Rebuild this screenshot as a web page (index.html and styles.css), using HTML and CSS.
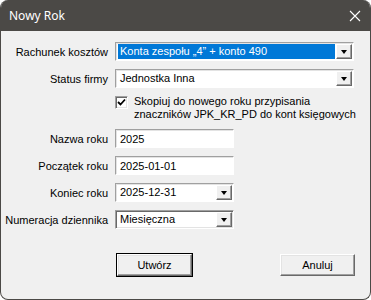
FILE: index.html
```html
<!DOCTYPE html>
<html lang="pl">
<head>
    <meta charset="UTF-8">
    <title>Nowy Rok</title>
    <link rel="stylesheet" href="styles.css">
</head>
<body>
    <div class="window">
        <div class="titlebar">
            <span class="title">Nowy Rok</span>
            <svg class="close" width="12" height="12" viewBox="0 0 12 12">
                <path d="M1 1 L11 11 M11 1 L1 11" stroke="#fff" stroke-width="1.1" fill="none"/>
            </svg>
        </div>

        <div class="form">
            <label class="label">Rachunek kosztów</label>
            <div class="combo wide">
                <span class="value selected">Konta zespołu „4” + konto 490</span>
                <span class="arrow"></span>
            </div>

            <label class="label">Status firmy</label>
            <div class="combo wide">
                <span class="value">Jednostka Inna</span>
                <span class="arrow"></span>
            </div>

            <span></span>
            <div class="check-row">
                <span class="checkbox">
                    <svg width="9" height="9" viewBox="0 0 9 9">
                        <path d="M1 4 L3.5 6.5 L8 1.5" stroke="#000" stroke-width="1.8" fill="none"/>
                    </svg>
                </span>
                <span class="check-text">Skopiuj do nowego roku przypisania<br>znaczników JPK_KR_PD do kont księgowych</span>
            </div>

            <label class="label">Nazwa roku</label>
            <div class="textbox">2025</div>

            <label class="label">Początek roku</label>
            <div class="textbox">2025-01-01</div>

            <label class="label">Koniec roku</label>
            <div class="combo short">
                <span class="value">2025-12-31</span>
                <span class="arrow"></span>
            </div>

            <label class="label">Numeracja dziennika</label>
            <div class="combo short deep">
                <span class="value">Miesięczna</span>
                <span class="arrow"></span>
            </div>
        </div>

        <div class="buttons">
            <button class="btn default">Utwórz</button>
            <button class="btn">Anuluj</button>
        </div>
    </div>
</body>
</html>
```

FILE: styles.css
```css
body {
    margin: 0;
    padding: 0;
    background: #ffffff;
    font-family: "Liberation Sans", Arial, sans-serif;
    font-size: 11px;
    color: #000;
}

.window {
    width: 371px;
    height: 300px;
    box-sizing: border-box;
    background: #f0f0f0;
    border: 1px solid #4b4946;
    border-top: none;
    border-radius: 8px;
    overflow: hidden;
}

.titlebar {
    height: 31px;
    background: #4b4946;
    display: flex;
    align-items: center;
    justify-content: space-between;
    padding: 0 10px 0 9px;
    margin: 0 -1px;
}

.title {
    color: #fff;
    font-family: "Noto Sans", "Open Sans", sans-serif;
    font-size: 12px;
}

.form {
    display: grid;
    grid-template-columns: 107px auto;
    column-gap: 7px;
    row-gap: 8px;
    padding-top: 11px;
    justify-items: start;
    align-items: center;
}

.label {
    justify-self: end;
    white-space: nowrap;
}

.combo,
.textbox {
    height: 19px;
    box-sizing: border-box;
    background: #fff;
    border: 1px solid #a0a0a0;
    border-right-color: #fff;
    border-bottom-color: #fff;
    box-shadow: inset 1px 1px 0 #e3e3e3;
    display: flex;
    align-items: center;
}

.combo.deep {
    border-color: #a0a0a0 #fff #fff #a0a0a0;
    box-shadow: inset 1px 1px 0 #696969, inset -1px -1px 0 #e3e3e3;
}

.wide {
    width: 239px;
}

.short,
.textbox {
    width: 119px;
}

.textbox {
    padding-left: 4px;
}

.value {
    flex: 1;
    height: 15px;
    line-height: 15px;
    margin: 0 1px 0 2px;
    padding-left: 2px;
}

.value.selected {
    background: #0078d7;
    color: #fff;
}

.arrow {
    width: 16px;
    height: 15px;
    box-sizing: border-box;
    margin-right: 1px;
    background: #f0f0f0;
    border: 1px solid;
    border-color: #fff #696969 #696969 #fff;
    box-shadow: inset -1px -1px 0 #a0a0a0;
    position: relative;
}

.arrow::after {
    content: "";
    position: absolute;
    left: 4px;
    top: 5px;
    border-left: 3.5px solid transparent;
    border-right: 3.5px solid transparent;
    border-top: 4px solid #000;
}

.check-row {
    display: flex;
    align-items: flex-start;
    gap: 6px;
    margin-top: -1px;
}

.checkbox {
    width: 13px;
    height: 13px;
    box-sizing: border-box;
    margin-top: 1px;
    background: #fff;
    border: 1px solid;
    border-color: #a0a0a0 #fff #fff #a0a0a0;
    box-shadow: inset 1px 1px 0 #696969, inset -1px -1px 0 #e3e3e3;
    display: flex;
    align-items: center;
    justify-content: center;
}

.check-text {
    line-height: 13px;
}

.buttons {
    display: flex;
    justify-content: space-between;
    padding: 25px 15px 0 116px;
}

.btn {
    width: 75px;
    height: 22px;
    font-family: "Liberation Sans", Arial, sans-serif;
    font-size: 11px;
    color: #000;
    background: #f0f0f0;
    border: 1px solid;
    border-color: #fff #696969 #696969 #fff;
    box-shadow: inset -1px -1px 0 #a0a0a0, inset 1px 1px 0 #e3e3e3;
    padding: 0;
}

.btn.default {
    outline: 1px solid #000;
}
```
